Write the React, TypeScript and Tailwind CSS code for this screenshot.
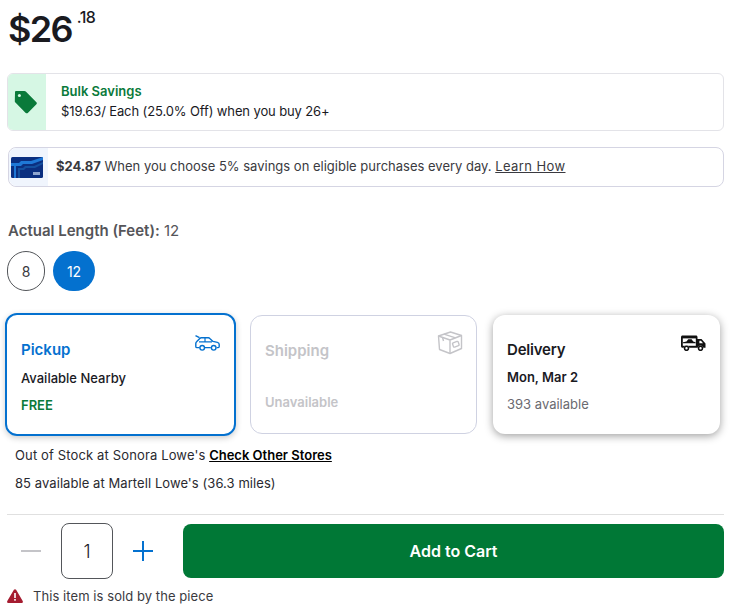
import React from "react";

const TagIcon = () => (
  <svg width="26" height="26" viewBox="0 0 26 26">
    <path
      d="M3 3.2 C3 2.5 3.5 2 4.2 2 L12.4 2 C13 2 13.4 2.2 13.8 2.6 L24.4 13.2 C25 13.8 25 14.7 24.4 15.3 L15.8 23.9 C15.2 24.5 14.3 24.5 13.7 23.9 L3.4 13.6 C3 13.2 2.8 12.8 2.8 12.2 Z"
      fill="#0a7a3a"
    />
    <circle cx="7.4" cy="6.6" r="1.5" fill="#d6f7e4" />
  </svg>
);

const CardIcon = () => (
  <svg width="32" height="21" viewBox="0 0 32 21">
    <rect width="32" height="21" rx="1.5" fill="#0b2f80" />
    <path d="M0 6 H8 L10 4 H20 L32 0 V3 L21 7 H12 L10 9 H5 V21 H3 V9 H0 Z" fill="#1f78d6" />
    <path d="M7 11 H12 L14 9 H23 L32 5 V7 L24 11 H15 L13 13 H9 V21 H7 Z" fill="#14509f" />
    <rect x="22" y="15" width="7" height="3" fill="#8fa6cf" />
  </svg>
);

const CarIcon = () => (
  <svg width="25" height="16" viewBox="0 0 25 16" fill="none" stroke="#0471cf" strokeWidth="1.4" strokeLinejoin="round">
    <path d="M0.5 0.7 L4.5 2.6" />
    <path d="M4.6 12.6 H2 C1.2 12.6 0.8 12.2 0.8 11.4 V8.6 C0.8 7.8 1.2 7.2 1.8 6.6 L4.8 3.4 C5.2 3 5.6 2.8 6.2 2.8 H13.4 C14 2.8 14.4 3 14.8 3.4 L18 6.4 L22.4 7.4 C23.6 7.7 24.2 8.4 24.2 9.4 V11.6 C24.2 12.2 23.8 12.6 23.2 12.6 H21.6 M15.8 12.6 H9.8" />
    <path d="M4 6.8 H17 M10 3 V6.8" strokeWidth="1.2" />
    <circle cx="7.2" cy="12.8" r="2.3" />
    <circle cx="18.7" cy="12.8" r="2.3" />
  </svg>
);

const BoxIcon = () => (
  <svg width="26" height="24" viewBox="0 0 26 24" fill="none" stroke="#c4c4c8" strokeWidth="1.4" strokeLinejoin="round">
    <path d="M1.5 5 L13.5 1 L24.5 4.5 V17.5 L13 22.5 L2.5 18.5 Z" />
    <path d="M1.5 5 L13 9 L24.5 4.5 M13 9 V22.5" />
    <path d="M7 3.2 L18.5 6.8 M5.5 6.3 L6.5 10" />
    <rect x="15.8" y="11" width="6" height="4.5" rx="1" transform="rotate(-20 18.8 13.2)" />
  </svg>
);

const TruckIcon = () => (
  <svg width="25" height="16" viewBox="0 0 25 16">
    <path d="M1.5 0.5 H15 C15.8 0.5 16.5 1.2 16.5 2 V4 H20.5 L24.5 8.5 V12.8 H22.4 A3 3 0 0 0 16.6 12.8 H8.4 A3 3 0 0 0 2.6 12.8 H1.5 C0.7 12.8 0 12.1 0 11.3 V2 C0 1.2 0.7 0.5 1.5 0.5 Z" fill="#111" />
    <rect x="1.8" y="3.4" width="13" height="7.4" fill="#fff" />
    <path d="M2 7.2 L5.5 6.4 L7.2 4.2 H10.6 L12.2 6.4 L14.6 7.2 V8.2 H2 Z" fill="#111" />
    <path d="M18.4 5.8 H20 L22 8.2 H18.4 Z" fill="#fff" />
    <circle cx="5.5" cy="13.3" r="2" fill="#fff" stroke="#111" strokeWidth="1.6" />
    <circle cx="19.5" cy="13.3" r="2" fill="#fff" stroke="#111" strokeWidth="1.6" />
  </svg>
);

const WarnIcon = () => (
  <svg width="16" height="14" viewBox="0 0 16 14">
    <path d="M6.9 0.8 C7.4 -0.1 8.6 -0.1 9.1 0.8 L15.7 12 C16.2 12.9 15.6 14 14.6 14 H1.4 C0.4 14 -0.2 12.9 0.3 12 Z" fill="#a51c30" />
    <rect x="7.2" y="4" width="1.6" height="5" fill="#fff" />
    <rect x="7.2" y="10" width="1.6" height="1.7" fill="#fff" />
  </svg>
);

const App = () => {
  return (
    <div
      className="w-[732px] h-[612px] overflow-hidden bg-white text-[#1a1a1f]"
      style={{ fontFamily: "Inter, 'Open Sans', sans-serif" }}
    >
      <div className="flex h-[73px] pl-2 pt-[3px]">
        <span className="text-[36px] leading-[52px] font-semibold tracking-[-1.7px]">$26</span>
        <span className="ml-[5px] mt-[2px] text-[16px] leading-6 font-medium tracking-[-0.5px]">.18</span>
      </div>

      <div className="ml-[7px] w-[717px] h-[58px] flex rounded-md border border-[#e3e3e8] overflow-hidden">
        <div className="w-[38px] bg-[#d6f7e4] flex items-center justify-center shrink-0 pr-[5px]">
          <TagIcon />
        </div>
        <div className="pl-[15px] pt-[8px]">
          <div className="text-[13px] leading-[18px] font-semibold text-[#0a7a3a]">Bulk Savings</div>
          <div className="text-[13px] leading-[22px] tracking-[-0.12px]">$19.63/ Each (25.0% Off) when you buy 26+</div>
        </div>
      </div>

      <div className="mt-4 ml-[8px] w-[716px] h-[40px] flex items-center rounded-lg border border-[#d5d5e3]">
        <div className="w-[39px] h-full bg-[#f0f5fd] rounded-l-lg flex items-center justify-center shrink-0 pr-[4px]">
          <CardIcon />
        </div>
        <div className="pl-2 text-[13px] text-[#3a3a40]">
          <span className="font-bold">$24.87</span> When you choose 5% savings on eligible purchases every day.{" "}
          <span className="underline tracking-[0.4px]">Learn How</span>
        </div>
      </div>

      <div className="mt-[34px] pl-2 text-[15px] leading-5 text-[#555559]">
        <span className="font-semibold">Actual Length (Feet):</span> 12
      </div>

      <div className="mt-[10px] ml-[7px] flex gap-2">
        <div className="w-[38px] h-10 rounded-full border border-[#53565a] flex items-center justify-center text-[14px] text-[#3a3a40]">
          8
        </div>
        <div className="w-[42px] h-10 rounded-full bg-[#0471cf] flex items-center justify-center text-[14px] text-white">
          12
        </div>
      </div>

      <div className="mt-[22px] ml-[5px] flex items-center h-[123px]">
        <div className="relative w-[231px] h-[123px] rounded-xl border-2 border-[#0471cf] shadow-[0_2px_6px_rgba(0,0,0,0.2)] pl-[14px] pt-[25px]">
          <div className="absolute top-[20px] right-[14px]">
            <CarIcon />
          </div>
          <div className="text-[15px] leading-5 font-semibold text-[#0471cf]">Pickup</div>
          <div className="mt-[8px] text-[13px] leading-5 font-medium">Available Nearby</div>
          <div className="mt-[7px] text-[13px] leading-5 font-semibold text-[#0a7a3a]">FREE</div>
        </div>
        <div className="relative ml-[14px] w-[227px] h-[119px] rounded-xl border border-[#cfd2e2] pl-[14px] pt-[25px]">
          <div className="absolute top-[15px] right-[13px]">
            <BoxIcon />
          </div>
          <div className="text-[15px] leading-5 font-semibold text-[#c4c4c8]">Shipping</div>
          <div className="mt-[31px] text-[13px] leading-5 font-semibold text-[#c4c4c8]">Unavailable</div>
        </div>
        <div className="relative ml-4 w-[227px] h-[119px] rounded-xl shadow-[0_2px_8px_rgba(0,0,0,0.38)] pl-[14px] pt-[25px]">
          <div className="absolute top-[20px] right-[14px]">
            <TruckIcon />
          </div>
          <div className="text-[15px] leading-5 font-semibold tracking-[-0.2px]">Delivery</div>
          <div className="mt-[7px] text-[13px] leading-5 font-semibold">Mon, Mar 2</div>
          <div className="mt-[7px] text-[13px] leading-5 text-[#6a6a70]">393 available</div>
        </div>
      </div>

      <div className="mt-[9px] pl-[15px] text-[13px] leading-5 text-[#2a2a30]">
        <span className="tracking-[0.14px]">Out of Stock at Sonora Lowe's</span>{" "}
        <span className="font-semibold underline text-black">Check Other Stores</span>
      </div>
      <div className="mt-2 pl-[15px] text-[13px] leading-5 text-[#2a2a30] tracking-[0.07px]">
        85 available at Martell Lowe's (36.3 miles)
      </div>

      <div className="mt-[21px] ml-[7px] w-[717px] border-t border-[#e0e0e0]" />

      <div className="mt-2 ml-[7px] w-[717px] flex items-center h-[56px]">
        <div className="ml-[14px] w-[20px] h-[2px] bg-[#c4c4c8]" />
        <div className="ml-[20px] w-[52px] h-[56px] rounded-lg border border-[#53565a] flex items-center justify-center text-[18px] font-light">
          1
        </div>
        <div className="relative ml-[20px] w-[20px] h-[20px] shrink-0">
          <div className="absolute left-0 top-[9px] w-[20px] h-[2px] bg-[#0471cf]" />
          <div className="absolute left-[9px] top-0 w-[2px] h-[20px] bg-[#0471cf]" />
        </div>
        <div className="ml-[30px] w-[541px] h-[54px] rounded-lg bg-[#007836] flex items-center justify-center text-[16px] font-semibold text-white">
          Add to Cart
        </div>
      </div>

      <div className="mt-[7px] ml-[7px] flex items-center gap-[10px] text-[13px] leading-5 text-[#3a3a40] tracking-[0.07px]">
        <WarnIcon />
        <span>This item is sold by the piece</span>
      </div>
    </div>
  );
};

export default App;
